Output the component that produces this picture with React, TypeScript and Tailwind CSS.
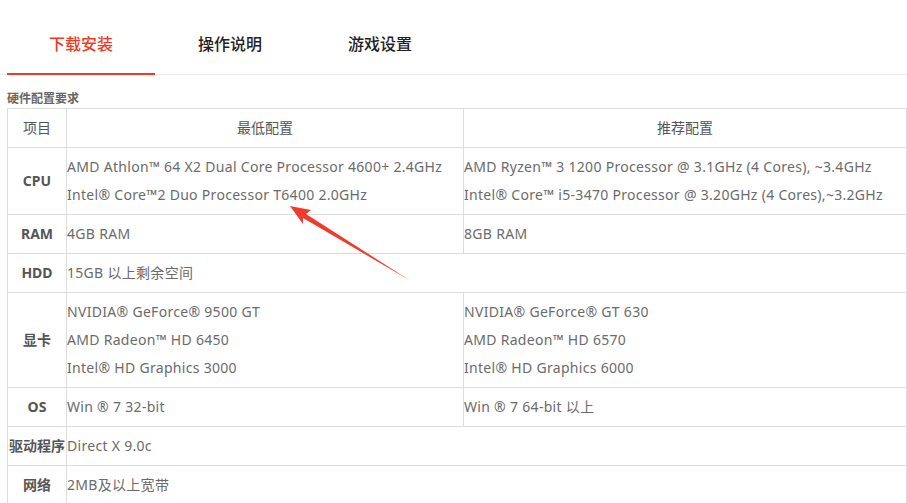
import React from "react";

const font = { fontFamily: '"Noto Sans", "Noto Sans CJK SC", sans-serif' };

function Row({ label, min, rec, span }: { label: string; min: string[]; rec?: string[]; span?: boolean }) {
  return (
    <tr>
      <td className="border border-[#ddd] text-center font-bold text-[#555] text-[14px] leading-[28px] py-[5px] px-0 whitespace-nowrap">{label}</td>
      <td colSpan={span ? 2 : 1} className="border border-[#ddd] text-[#6b6b6b] text-[14px] leading-[28px] tracking-[0.3px] py-[5px] pl-0 align-middle">
        {min.map((m, i) => (
          <div key={i}>{m}</div>
        ))}
      </td>
      {!span && (
        <td className="border border-[#ddd] text-[#6b6b6b] text-[14px] leading-[28px] tracking-[0.3px] py-[5px] pl-0 align-middle">
          {rec!.map((m, i) => (
            <div key={i}>{m}</div>
          ))}
        </td>
      )}
    </tr>
  );
}

export default function App() {
  return (
    <div className="relative w-[907px] h-[503px] overflow-hidden bg-white" style={font}>
      <div className="flex pl-[7px] border-b border-[#eee] h-[75px]">
        <div className="w-[148px] flex items-center justify-center pt-[14px] text-[16px] font-medium text-[#f23a22] border-b-2 border-[#f23a22] -mb-px">下载安装</div>
        <div className="w-[150px] flex items-center justify-center pt-[14px] text-[16px] font-medium text-[#222]">操作说明</div>
        <div className="w-[150px] flex items-center justify-center pt-[14px] text-[16px] font-medium text-[#222]">游戏设置</div>
      </div>
      <div className="pl-[7px] pt-[17px] text-[12px] font-bold text-[#666] leading-[14px]">硬件配置要求</div>
      <table className="ml-[7px] w-[900px] border-collapse table-fixed mt-[2px]">
        <colgroup>
          <col className="w-[59px]" />
          <col className="w-[397px]" />
          <col />
        </colgroup>
        <thead>
          <tr>
            <th className="border border-[#ddd] font-normal text-[#555] text-[14px] leading-[28px] py-[5px]">项目</th>
            <th className="border border-[#ddd] font-normal text-[#555] text-[14px] leading-[28px] py-[5px]">最低配置</th>
            <th className="border border-[#ddd] font-normal text-[#555] text-[14px] leading-[28px] py-[5px]">推荐配置</th>
          </tr>
        </thead>
        <tbody>
          <Row
            label="CPU"
            min={["AMD Athlon™ 64 X2 Dual Core Processor 4600+ 2.4GHz", "Intel® Core™2 Duo Processor T6400 2.0GHz"]}
            rec={["AMD Ryzen™ 3 1200 Processor @ 3.1GHz (4 Cores), ~3.4GHz", "Intel® Core™ i5-3470 Processor @ 3.20GHz (4 Cores),~3.2GHz"]}
          />
          <Row label="RAM" min={["4GB RAM"]} rec={["8GB RAM"]} />
          <Row label="HDD" min={["15GB 以上剩余空间"]} span />
          <Row
            label="显卡"
            min={["NVIDIA® GeForce® 9500 GT", "AMD Radeon™ HD 6450", "Intel® HD Graphics 3000"]}
            rec={["NVIDIA® GeForce® GT 630", "AMD Radeon™ HD 6570", "Intel® HD Graphics 6000"]}
          />
          <Row label="OS" min={["Win ® 7 32-bit"]} rec={["Win ® 7 64-bit 以上"]} />
          <Row label="驱动程序" min={["Direct X 9.0c"]} span />
          <Row label="网络" min={["2MB及以上宽带"]} span />
        </tbody>
      </table>
      <svg className="absolute left-0 top-0 pointer-events-none" width="907" height="503" viewBox="0 0 907 503">
        <polygon points="290,206 311,210 306,214 410,280.5 303,218 303,224" fill="#f03a2e" />
      </svg>
    </div>
  );
}
